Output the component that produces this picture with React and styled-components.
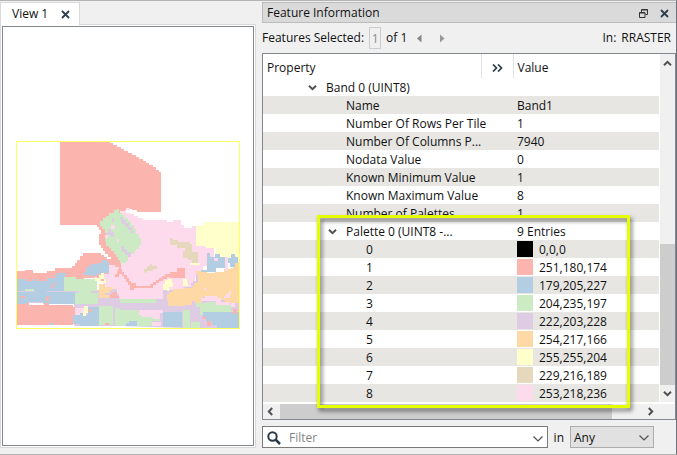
import React from 'react';
import styled, { createGlobalStyle } from 'styled-components';

const GlobalStyle = createGlobalStyle`
	* { box-sizing:border-box; }
	body {
		margin:0;
		background:#f0f0f0;
		color:#111;
		font-family:"Open Sans", "Noto Sans", sans-serif;
		font-size:12px;
		line-height:18px;
	}
	button, input, select {
		font:inherit;
		color:inherit;
		margin:0;
		padding:0;
		border:none;
		background:none;
		outline:none;
	}
	svg { display:block; }
`;

const Workspace = styled.div`
	display:flex;
	gap:6px;
	height:100vh;
	padding-top:1px;
	border-top:1px solid #b4b4b4;
	border-right:1px solid #70707c;
	border-bottom:1px solid #b4b4b4;
`;
const ViewPane = styled.section`
	display:flex;
	flex-direction:column;
	flex:0 0 256px;
	min-width:0;
	padding-bottom:6px;
`;
const Tab = styled.div`
	display:flex;
	align-items:center;
	align-self:flex-start;
	gap:13px;
	height:23px;
	margin-bottom:-1px;
	padding:0 9px 0 11px;
	background:#fff;
	border:1px solid #d9d9d9;
	border-bottom:none;
	z-index:1;
`;
const IconButton = styled.button`
	display:flex;
	align-items:center;
	justify-content:center;
	min-width:9px;
	cursor:pointer;
`;
const ViewFrame = styled.div`
	flex:1;
	display:flex;
	min-height:0;
	padding:1px;
	background:#fff;
	border:1px solid #d9d9d9;
`;
const Canvas = styled.div`
	flex:1;
	display:flex;
	align-items:center;
	justify-content:center;
	padding-bottom:2px;
	border:1px solid #828790;
`;
const Dock = styled.section`
	flex:1;
	min-width:0;
	display:flex;
	flex-direction:column;
	padding-bottom:6px;
`;
const TitleBar = styled.header`
	display:flex;
	align-items:center;
	gap:12px;
	flex:0 0 21px;
	padding:1px 7px 0 4px;
	background:#dadada;
	border:1px solid #bcbcbc;
	border-right:none;
`;
const Title = styled.span`
	flex:1;
`;
const InfoBar = styled.div`
	display:flex;
	align-items:center;
	flex:0 0 30px;
	padding:0 5px 0 0;
	gap:5px;
`;
const PageBox = styled.input`
	width:12px;
	height:22px;
	text-align:center;
	color:#8c8c8c;
	border:1px solid #ccc;
`;
const Steps = styled.div`
	display:flex;
	flex:1;
	gap:14px;
	margin-left:3px;
`;
const Grid = styled.div`
	position:relative;
	flex:1;
	min-height:0;
	display:flex;
	flex-direction:column;
	background:#fff;
	border:1px solid #828790;
`;
const GridBody = styled.div`
	flex:1;
	display:flex;
	min-height:0;
	overflow:hidden;
`;
const Table = styled.table`
	flex:1;
	align-self:flex-start;
	width:100%;
	table-layout:fixed;
	border-collapse:collapse;
	white-space:nowrap;
`;
const Head = styled.th`
	width:${p => p.$width || 'auto'};
	height:24px;
	padding:3px 4px 0;
	font-weight:400;
	text-align:left;
	border-left:${p => p.$line ? '1px solid #e2e2e2' : 'none'};
	svg { margin:0 auto; }
`;
const Row = styled.tr`
	height:18px;
	background:${p => p.$shade ? '#e7e6e2' : '#fff'};
`;
const Cell = styled.td`
	height:18px;
	padding:0 0 0 ${p => p.$pad}px;
`;
const CellLine = styled.div`
	display:flex;
	align-items:center;
	height:18px;
	gap:${p => p.$gap || 0}px;
`;
const CellText = styled.span`
	padding-top:2px;
`;
const Swatch = styled.i`
	width:16px;
	height:16px;
	background:rgb(${p => p.$rgb});
`;
const VBar = styled.div`
	flex:0 0 16px;
	display:flex;
	flex-direction:column;
	align-items:center;
	justify-content:space-between;
	padding:5px 0 4px;
	background:#f0f0f0;
	border-left:1px solid #fff;
`;
const VThumb = styled.div`
	width:15px;
	flex:0 0 141px;
	margin:auto 0 4px;
	background:#cdcdcd;
`;
const HBar = styled.div`
	display:flex;
	align-items:center;
	flex:0 0 17px;
	padding:0 20px 0 3px;
	background:#f0f0f0;
	border-top:2px solid #fff;
`;
const HThumb = styled.div`
	flex:1;
	height:15px;
	margin:0 34px 0 5px;
	background:#cdcdcd;
`;
// callout drawn over the palette rows
const Highlight = styled.div`
	position:absolute;
	inset:161px 45px 11px 54px;
	border:3px solid #e6ff00;
	filter:drop-shadow(2px 3px 2px rgba(0,0,0,.55));
	pointer-events:none;
`;
const FilterBar = styled.div`
	display:flex;
	align-items:center;
	gap:6px;
	flex:0 0 22px;
	margin-top:6px;
	padding-right:22px;
`;
const Combo = styled.div`
	flex:1;
	display:flex;
	align-items:center;
	gap:8px;
	height:22px;
	padding:2px 4px 0;
	background:#fff;
	border:1px solid #7a7a7a;
`;
const FilterInput = styled.input`
	flex:1;
	min-width:0;
	&::placeholder { color:#858585; opacity:1; }
`;
const SelectBox = styled.div`
	display:grid;
	align-items:center;
	width:84px;
	height:22px;
	background:#e1e1e1;
	border:1px solid #adadad;
	> * { grid-area:1 / 1; }
	svg { justify-self:end; margin-right:4px; pointer-events:none; }
`;
const Select = styled.select`
	appearance:none;
	width:100%;
	height:20px;
	padding:2px 0 0 3px;
`;
const ScopeLabel = styled.label`
	padding-top:2px;
`;

const turns = { down: 0, left: 90, up: 180, right: 270 };

function Chevron({ dir = 'down', size = 9, color = '#505050', thick = 2 }) {
	return (
		<svg width={size} height={size} viewBox="0 0 9 9" aria-hidden="true">
			<path d="M1 2.8 L4.5 6.2 L8 2.8" fill="none" stroke={color} strokeWidth={thick} transform={`rotate(${turns[dir]} 4.5 4.5)`} />
		</svg>
	);
}

function WideChevron() {
	return (
		<svg width="10" height="9" viewBox="0 0 10 9" aria-hidden="true">
			<path d="M.5 2.5 L5 7 L9.5 2.5" fill="none" stroke="#505050" strokeWidth="1.2" />
		</svg>
	);
}

function Cross() {
	return (
		<svg width="9" height="9" viewBox="0 0 9 9" aria-hidden="true">
			<path d="M1 1 L8 8 M8 1 L1 8" stroke="#2e3d48" strokeWidth="1.8" />
		</svg>
	);
}

function Restore() {
	return (
		<svg width="9" height="9" viewBox="0 0 9 9" aria-hidden="true">
			<path d="M2.5 3 V.5 H8.5 V5.5 H6.5 M.5 3.5 H6 V8.5 H.5 Z M.5 4 H6 M2.5 1 H8.5" fill="none" stroke="#333" />
		</svg>
	);
}

function Arrow({ flip, color }) {
	return (
		<svg width="9" height="9" viewBox="0 0 9 9" aria-hidden="true">
			<path d={flip ? 'M2 .5 L6.5 4.5 L2 8.5 Z' : 'M6.5 .5 L2 4.5 L6.5 8.5 Z'} fill={color} />
		</svg>
	);
}

const RED = '#fbb4ae';
const BLUE = '#b3cde3';
const GREEN = '#ccebc5';
const PURPLE = '#decbe4';
const ORANGE = '#fed9a6';
const YELLOW = '#ffffcc';
const BEIGE = '#e5d8bd';
const PINK = '#fddaec';

const zones = [
	[PURPLE, 'M17 290H110L120 285L168 290L196 285H239V328H183L120 326H74V303H17Z'],
	[RED, 'M60 141H110V143H113V145H117V147H121V149H124V151H128V153H132V155H136V157H139V159H143V161H146V163H149V165H153V167H156V170H159V172H161V212H137V210H132V209H126V210L118 218L107 230L106 240L111 246L117 254L123 264L119 274L112 265L113 260H111V257H108V254H105V251H103V248H101V245H99V234H101V230H99V227H97V225H60Z'],
	[RED, 'M17 271H25V270H33V273H47V271H55V268H72V266H75V263H77V260H80V256H83V253H101V255H104V257H107V259H112L118 266L108 278H84V279H70L65 285H17Z'],
	[BLUE, 'M17 279H26V281H33V279H37V281H47V278H55V275H57V273H66V276H64V291H17Z'],
	[BLUE, 'M17 292H35V290H47V292H75V304H43V302H28V304H17Z'],
	[RED, 'M49 288H51V285H53V283H55V285H53V288Z M20 296H25V298H20Z M47 296H49V301H46V298Z'],
	[GREEN, 'M25 289H34V291H25Z M64 277H76V279H97V291H91V293H79V291H64Z M75 293H98V304H75Z'],
	[BLUE, 'M84 275V272H86V268H88V266H91V264H97V263H102V260H107V262H109V273H102V274H97V276Z'],
	[PINK, 'M120 211H125L127 213L134 214V216H138V218H143V220H167V222H173V220H181V225H184V228H192V226H196V243H205V247H214V258H210V266H203V271H196V276L193 287H183V290H167V293L164 299H119V294H117V289H113V288H107L103 283V274H109V265H120V240Z'],
	[RED, 'M113 260H121V269H119V267H115V264H112Z M113 292H117V296H119V298H110V294H113Z'],
	[GREEN, 'M100 221H103V218H106V216H109V213H114V210H117V209H119V213H122V215H125V218H128V221H131V225H134V229H136V234H139V238H141V245H139V249H136V251H134V254H130V257H128V261H126V263H120V260H118V257H116V254H114V251H111V248H109V246H106V241H105V238H107V233H105V229H102V226H100Z'],
	[PURPLE, 'M120 217H123V220H126V223H129V227H132V231H134V233H131V230H128V227H125V224H122Z M106 233H108V229H111V232H114V237H111V235H106Z M121 246H124V249H127V252H131V257H128V255H125V252H122Z M112 218H114V222H112Z'],
	[PINK, 'M111 225H115V229H111Z M105 235H108V238H105Z M117 239H119V242H117Z M126 208H130V210H126Z'],
	[RED, 'M118 269H122V272H124V275H127V278H129V281H131V283H136V286H150V284H153V282H156V280H159V278H162V276H165V274H170V272H177V268H185V278H170V277H167V279H163V281H159V283H156V285H153V288H134V290H130V285H128V282H126V279H124V276H122V274H119V277H115V274H117Z'],
	[YELLOW, 'M95 277H98V275H101V273H104V279H106V283H101V281H95Z M163 284H165V280H168V279H172V283H173V287H169V291H163Z M183 279H187V283H188V286H183Z'],
	[RED, 'M97 275H99V278H97Z M101 279H104V281H101Z'],
	[ORANGE, 'M99 284H105V287H113V290H110V293H105V295H109V298H99Z'],
	[BEIGE, 'M170 238H173V240H178V242H190V244H192V252H198V263H192V260H188V258H183V251H185V248H177V245H170Z M144 272V269H147V266H150V264H152V266H157V269H153V271H147V273Z'],
	[YELLOW, 'M196 226H200V225H204V222H239V258H215V248H206V246H196Z M190 263H200V265H190Z'],
	[ORANGE, 'M196 271H207V273H215V272H224V269H231V268H233V262H239V303H230V305H225V300H215V297H202V303H195V301H192V305H185V306H168V301H167V294H169V292H173V289H183V288H192V283H196V278H198V275H196Z'],
	[BLUE, 'M207 253H210V257H215V254H220V257H225V268H216V272H201V270H207Z M228 258H231V254H235V257H238V263H235V267H230V263H228Z'],
	[PINK, 'M225 257H228V271H225Z M214 258H218V261H214Z M226 294H229V291H231V294H230V298H224V296H226Z M201 298H205V296H217V298H221V302H230V305H216V301H201Z M204 288H206V290H204Z M188 276H191V280H188Z'],
	[PURPLE, 'M193 281H196V274H198V283H194V286H191V283H193Z M163 290H167V311H160V303H155V299H163Z'],
	[RED, 'M17 304H26V303H29V305H44V303H49V305H73V307H75V314H78V318H73V325H17Z'],
	[PINK, 'M75 308H86V313H83V315H75Z M139 310H163V313H160V319H153V317H139V315H138Z M152 322H161V326H152Z M231 303H235V307H231Z'],
	[GREEN, 'M120 299H156V303H120Z M99 306H113V325H99Z M115 308H120V310H138V315H142V317H153V319H160V321H152V326H115Z M183 310H190V328H183Z M196 303H207V302H216V305H231V311H239V315H200V307H196Z M191 322H200V328H191Z'],
	[BLUE, 'M73 315H80V313H84V315H88V307H99V326H80V324H73Z M163 312H182V327H163Z M126 323H129V321H137V326H126Z M203 312H239V328H217V325H212V321H206V317H203Z M50 323H53V325H50Z'],
	[YELLOW, 'M84 306H88V313H86V316H83Z'],
	[RED, 'M89 309H92V312H89Z M233 309H237V314H233Z M202 317H206V319H202Z M207 321H211V326H207Z M105 323H109V325H105Z'],
];

function RasterMap() {
	return (
		<svg width="224" height="188" viewBox="16 141 224 188" role="img" aria-label="Raster view">
			{zones.map(([fill, d], i) => <path key={i} d={d} fill={fill} />)}
			<path d="M16.5 141.5H239.5V328.5H16.5Z" fill="none" stroke="#ffff60" />
		</svg>
	);
}

const rows = [
	{ level: 1, name: 'Band 0 (UINT8)', open: true },
	{ level: 2, name: 'Name', value: 'Band1' },
	{ level: 2, name: 'Number Of Rows Per Tile', value: '1' },
	{ level: 2, name: 'Number Of Columns P...', value: '7940' },
	{ level: 2, name: 'Nodata Value', value: '0' },
	{ level: 2, name: 'Known Minimum Value', value: '1' },
	{ level: 2, name: 'Known Maximum Value', value: '8' },
	{ level: 2, name: 'Number of Palettes', value: '1' },
	{ level: 2, name: 'Palette 0 (UINT8 -...', value: '9 Entries', open: true },
	{ level: 3, name: '0', value: '0,0,0', color: true },
	{ level: 3, name: '1', value: '251,180,174', color: true },
	{ level: 3, name: '2', value: '179,205,227', color: true },
	{ level: 3, name: '3', value: '204,235,197', color: true },
	{ level: 3, name: '4', value: '222,203,228', color: true },
	{ level: 3, name: '5', value: '254,217,166', color: true },
	{ level: 3, name: '6', value: '255,255,204', color: true },
	{ level: 3, name: '7', value: '229,216,189', color: true },
	{ level: 3, name: '8', value: '253,218,236', color: true },
];

function PropertyRow({ row, shade }) {
	const indent = 43 + row.level * 20;
	return (
		<Row $shade={shade}>
			<Cell $pad={row.open ? indent - 18 : indent}>
				<CellLine $gap={9}>
					{row.open && <IconButton aria-label={`Collapse ${row.name}`}><Chevron /></IconButton>}
					<CellText>{row.name}</CellText>
				</CellLine>
			</Cell>
			<Cell $pad={0} />
			<Cell $pad={4}>
				<CellLine $gap={6}>
					{row.color && <Swatch $rgb={row.value} />}
					<CellText>{row.value}</CellText>
				</CellLine>
			</Cell>
		</Row>
	);
}

function PropertyGrid() {
	return (
		<Grid>
			<GridBody>
				<Table>
					<thead>
						<tr>
							<Head $width="218px">Property</Head>
							<Head $width="32px" $line>
								<svg width="11" height="8" viewBox="0 0 11 8" aria-hidden="true">
									<path d="M1 .5 L4.5 4 L1 7.5 M6 .5 L9.5 4 L6 7.5" fill="none" stroke="#2e3d48" strokeWidth="1.7" />
								</svg>
							</Head>
							<Head $line>Value</Head>
						</tr>
					</thead>
					<tbody>
						{rows.map((row, i) => <PropertyRow key={i} row={row} shade={i % 2 === 1} />)}
					</tbody>
				</Table>
				<VBar>
					<Chevron dir="up" />
					<VThumb />
					<Chevron />
				</VBar>
			</GridBody>
			<HBar>
				<Chevron dir="left" />
				<HThumb />
				<Chevron dir="right" />
			</HBar>
			<Highlight />
		</Grid>
	);
}

function App() {
	return (
		<>
			<GlobalStyle />
			<Workspace>
				<ViewPane>
					<Tab>
						View 1
						<IconButton aria-label="Close view"><Cross /></IconButton>
					</Tab>
					<ViewFrame>
						<Canvas><RasterMap /></Canvas>
					</ViewFrame>
				</ViewPane>
				<Dock>
					<TitleBar>
						<Title>Feature Information</Title>
						<IconButton aria-label="Float panel"><Restore /></IconButton>
						<IconButton aria-label="Close panel"><Cross /></IconButton>
					</TitleBar>
					<InfoBar>
						<label htmlFor="page">Features Selected:</label>
						<PageBox id="page" defaultValue="1" />
						<span>of 1</span>
						<Steps>
							<IconButton aria-label="Previous feature"><Arrow color="#858585" /></IconButton>
							<IconButton aria-label="Next feature"><Arrow flip color="#999" /></IconButton>
						</Steps>
						<span>In:</span>
						<span>RRASTER</span>
					</InfoBar>
					<PropertyGrid />
					<FilterBar>
						<Combo>
							<svg width="14" height="14" viewBox="0 0 14 14" aria-hidden="true">
								<circle cx="5.5" cy="5.5" r="4.2" fill="none" stroke="#263a47" strokeWidth="2" />
								<path d="M8.5 8.5 L13 13" stroke="#263a47" strokeWidth="2.5" />
							</svg>
							<FilterInput aria-label="Filter" placeholder="Filter" />
							<IconButton aria-label="Show recent filters"><WideChevron /></IconButton>
						</Combo>
						<ScopeLabel htmlFor="scope">in</ScopeLabel>
						<SelectBox>
							<Select id="scope" defaultValue="Any">
								<option>Any</option>
							</Select>
							<WideChevron />
						</SelectBox>
					</FilterBar>
				</Dock>
			</Workspace>
		</>
	);
}

export default App;
